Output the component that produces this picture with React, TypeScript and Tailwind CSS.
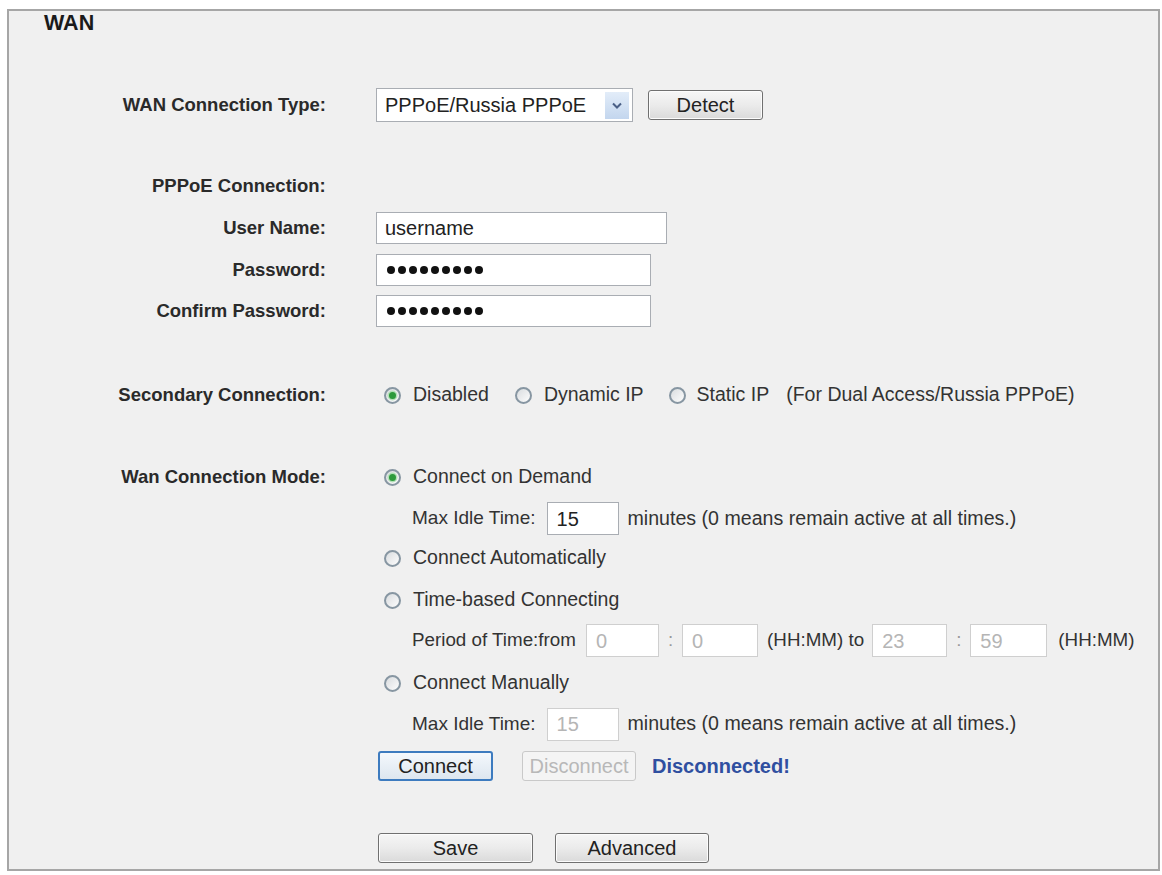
import type { ReactNode } from 'react';

const btn =
  'flex items-center justify-center rounded-[3px] border border-[#707070] bg-gradient-to-b from-[#f6f6f6] via-[#ebebeb] to-[#dadada] text-[20px] text-[#222] shadow-[inset_0_0_0_1px_#fcfcfc]';

function Radio({ checked = false, className = 'ml-[8px]' }: { checked?: boolean; className?: string }) {
  return (
    <span
      className={`flex h-[17px] w-[17px] shrink-0 items-center justify-center rounded-full border-2 border-[#8796a2] bg-gradient-to-br from-[#d9dcdf] to-[#fdfdfd] ${className}`}
    >
      {checked && (
        <span className="h-[7px] w-[7px] rounded-full bg-[#2d9a3c] shadow-[0_0_0_1.5px_#b3e0b8]" />
      )}
    </span>
  );
}

function Row({ label, children, className = '' }: { label?: string; children?: ReactNode; className?: string }) {
  return (
    <div className={`flex items-center pl-[101px] ${className}`}>
      <div className="w-[216px] shrink-0 whitespace-nowrap text-right text-[18.5px] font-bold text-[#2a2a2a]">{label}</div>
      <div className="ml-[50px] flex items-center whitespace-nowrap">{children}</div>
    </div>
  );
}

function Dots() {
  return (
    <div className="flex gap-[3px]">
      {Array.from({ length: 9 }).map((_, i) => (
        <span key={i} className="h-[8px] w-[8px] rounded-full bg-[#111]" />
      ))}
    </div>
  );
}

function Box({ value, disabled = false, w = 'w-[73px]' }: { value: string; disabled?: boolean; w?: string }) {
  return (
    <div
      className={`flex h-[33px] ${w} items-center border bg-white pl-[9px] text-[20px] ${
        disabled ? 'border-[#cfcfcf] text-[#b5b5b5]' : 'border-[#a9adb3] text-[#222]'
      }`}
    >
      {value}
    </div>
  );
}

export default function App() {
  return (
    <div className="min-h-screen bg-white pl-[7px] pt-[9px] font-['Liberation_Sans',Arial,sans-serif] text-[#333]">
      <div className="flex h-[862px] w-[1153px] flex-col border-2 border-[#a6a6a6] bg-[#f0f0f0]">
        <h1 className="ml-[35px] h-[24px] text-[21.5px] leading-[24px] font-bold text-[#1a1a1a]">WAN</h1>

        <Row label="WAN Connection Type:" className="mt-[53px] h-[34px]">
          <div className="flex h-[34px] w-[257px] items-center justify-between border border-[#a9adb3] bg-white pl-[8px] pr-[3px]">
            <span className="text-[20px] text-[#222]">PPPoE/Russia PPPoE</span>
            <span className="flex h-[27px] w-[24px] items-center justify-center bg-gradient-to-b from-[#e3edf9] to-[#c3d6ee]">
              <svg width="10" height="7" viewBox="0 0 10 7">
                <path d="M1 1.5 L5 5.5 L9 1.5" fill="none" stroke="#4a5f86" strokeWidth="2" />
              </svg>
            </span>
          </div>
          <div className={`${btn} ml-[15px] h-[30px] w-[115px]`}>Detect</div>
        </Row>

        <div className="mt-[52px] flex h-[24px] items-center pl-[101px]">
          <div className="w-[216px] whitespace-nowrap pl-[42px] text-[18.5px] font-bold text-[#2a2a2a]">PPPoE Connection:</div>
        </div>

        <Row label="User Name:" className="mt-[14px] h-[32px]">
          <div className="flex h-[32px] w-[291px] items-center border border-[#a9adb3] bg-white pl-[8px] text-[20px] text-[#222]">
            username
          </div>
        </Row>
        <Row label="Password:" className="mt-[10px] h-[32px]">
          <div className="flex h-[32px] w-[275px] items-center border border-[#a9adb3] bg-white pl-[10px]">
            <Dots />
          </div>
        </Row>
        <Row label="Confirm Password:" className="mt-[9px] h-[32px]">
          <div className="flex h-[32px] w-[275px] items-center border border-[#a9adb3] bg-white pl-[10px]">
            <Dots />
          </div>
        </Row>

        <Row label="Secondary Connection:" className="mt-[56px] h-[24px] text-[19.5px]">
          <Radio checked />
          <span className="ml-[12px]">Disabled</span>
          <Radio className="ml-[26px]" />
          <span className="ml-[12px]">Dynamic IP</span>
          <Radio className="ml-[25px]" />
          <span className="ml-[11px]">Static IP</span>
          <span className="ml-[17px]">(For Dual Access/Russia PPPoE)</span>
        </Row>

        <Row label="Wan Connection Mode:" className="mt-[58px] h-[24px] text-[19.5px]">
          <Radio checked />
          <span className="ml-[12px]">Connect on Demand</span>
        </Row>
        <Row className="mt-[13px] h-[33px] text-[19px]">
          <span className="ml-[36px]">Max Idle Time:</span>
          <div className="ml-[11px]">
            <Box value="15" w="w-[72px]" />
          </div>
          <span className="ml-[9px] text-[19.6px]">minutes (0 means remain active at all times.)</span>
        </Row>
        <Row className="mt-[11px] h-[24px] text-[19.5px]">
          <Radio />
          <span className="ml-[12px]">Connect Automatically</span>
        </Row>
        <Row className="mt-[18px] h-[24px] text-[19.5px]">
          <Radio />
          <span className="ml-[12px]">Time-based Connecting</span>
        </Row>
        <Row className="mt-[12px] h-[33px] text-[18.8px]">
          <span className="ml-[36px]">Period of Time:from</span>
          <div className="ml-[10px]">
            <Box value="0" disabled />
          </div>
          <span className="mx-[9px] text-[#9a9a9a]">:</span>
          <Box value="0" disabled w="w-[76px]" />
          <span className="ml-[9px]">(HH:MM) to</span>
          <div className="ml-[8px]">
            <Box value="23" disabled w="w-[75px]" />
          </div>
          <span className="mx-[9px] text-[#9a9a9a]">:</span>
          <Box value="59" disabled w="w-[77px]" />
          <span className="ml-[11px]">(HH:MM)</span>
        </Row>
        <Row className="mt-[14px] h-[24px] text-[19.5px]">
          <Radio />
          <span className="ml-[12px]">Connect Manually</span>
        </Row>
        <Row className="mt-[13px] h-[32px] text-[19px]">
          <span className="ml-[36px]">Max Idle Time:</span>
          <div className="ml-[11px]">
            <Box value="15" disabled w="w-[72px]" />
          </div>
          <span className="ml-[9px] text-[19.6px]">minutes (0 means remain active at all times.)</span>
        </Row>

        <Row className="mt-[11px] h-[30px]">
          <div className="ml-[2px] flex h-[30px] w-[115px] items-center justify-center rounded-[3px] border-2 border-[#3d7bbf] bg-gradient-to-b from-[#f4f8fc] to-[#dde6ef] text-[20px] text-[#222]">
            Connect
          </div>
          <div className="ml-[29px] flex h-[30px] w-[114px] items-center justify-center rounded-[3px] border border-[#c9c9c9] bg-[#f4f4f4] text-[20px] text-[#b8b8b8]">
            Disconnect
          </div>
          <span className="ml-[16px] text-[20px] font-bold text-[#2f4fa0]">Disconnected!</span>
        </Row>

        <Row className="mt-[52px] h-[30px]">
          <div className={`${btn} ml-[2px] h-[30px] w-[155px]`}>Save</div>
          <div className={`${btn} ml-[22px] h-[30px] w-[154px]`}>Advanced</div>
        </Row>
      </div>
    </div>
  );
}
